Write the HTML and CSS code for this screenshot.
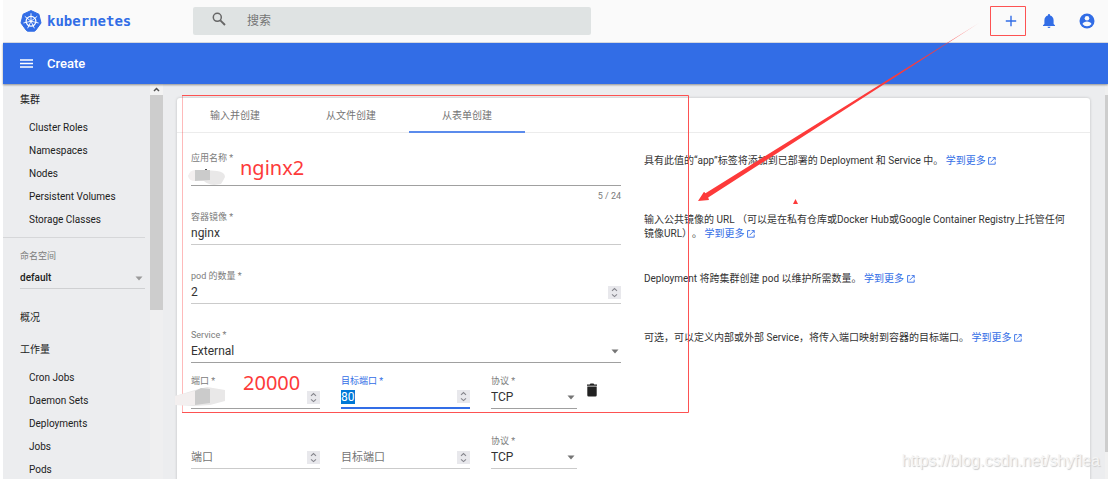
FILE: index.html
```html
<!DOCTYPE html>
<html lang="zh-CN">
<head>
<meta charset="utf-8">
<title>Kubernetes Dashboard</title>
<link rel="stylesheet" href="styles.css">
</head>
<body>
<svg class="defs" width="0" height="0" aria-hidden="true">
  <symbol id="caret" viewBox="0 0 8 5"><path d="M0.5 0.5h7L4 4.5z" fill="currentColor"/></symbol>
  <symbol id="spin" viewBox="0 0 13 13"><rect width="13" height="13" fill="#e8e8ec"/><path d="M4 4.8 6.5 2.6 9 4.8M4 8.4l2.5 2.2L9 8.4" fill="none" stroke="#85858c" stroke-width="1.1"/></symbol>
  <symbol id="ext" viewBox="0 0 8 8"><path d="M3.2.6H.6v6.6h6.6V4.6M4.6.6h2.6v2.6M7.2.6 2.6 5.2" fill="none" stroke="currentColor" stroke-width=".9"/></symbol>
</svg>

<header class="topbar">
  <a class="brand" href="#">
    <svg width="22" height="22" viewBox="0 0 22 22" aria-hidden="true">
      <path d="M11 .6 18.9 4.2 21 13 15.6 20.4Q15.1 21.2 14.2 21.2H7.8Q6.900 21.2 6.400 20.4L1 13 3.100 4.200z" fill="#326de6" stroke="#326de6" stroke-linejoin="round"/>
      <g fill="none" stroke="#fff" stroke-linecap="round">
        <circle cx="11" cy="11.300" r="4.900" stroke-width="1.200"/>
        <path stroke-width=".9" d="M11 9.800V3.700M12.200 10.300 16.900 6.600M12.500 11.600 18.200 12.900M11.700 12.700 14.200 17.900M10.300 12.700 7.800 17.900M9.500 11.600 3.800 12.900M9.800 10.300 5.100 6.600"/>
      </g>
      <circle cx="11" cy="11.300" r="1.300" fill="#fff"/>
    </svg>
    <span>kubernetes</span>
  </a>
  <label class="search">
    <svg width="14" height="14" viewBox="0 0 14 14" aria-hidden="true"><circle cx="5.300" cy="5.300" r="4" fill="none" stroke="#666" stroke-width="1.500"/><path d="m8.300 8.300 4.700 4.700" stroke="#666" stroke-width="1.900"/></svg>
    <input type="text" placeholder="搜索" aria-label="搜索">
  </label>
  <div class="actions">
    <button type="button" aria-label="创建"><svg width="16" height="16" viewBox="0 0 16 16"><path d="M8 2.800v10.400M2.800 8h10.400" stroke="#326de6" stroke-width="1.400"/></svg></button>
    <button type="button" aria-label="通知"><svg width="16" height="16" viewBox="0 0 16 16"><path d="M8 15a1.500 1.500 0 0 0 1.500-1.300h-3A1.500 1.500 0 0 0 8 15zM12.600 11V7.200c0-2.300-1.400-4.100-3.500-4.600V2a1.100 1.100 0 0 0-2.200 0v.6C4.800 3.100 3.400 4.900 3.400 7.200V11L2 12.300v.7h12v-.7z" fill="#326de6"/></svg></button>
    <button type="button" aria-label="用户"><svg width="16" height="16" viewBox="0 0 16 16"><circle cx="8" cy="8" r="7.500" fill="#326de6"/><circle cx="8" cy="5.200" r="2.300" fill="#fafafa"/><path d="M3.500 10.900c.1-1.500 3-2.400 4.500-2.400s4.400.9 4.500 2.400A5.400 5.400 0 0 1 8 13.300a5.400 5.400 0 0 1-4.500-2.400z" fill="#fafafa"/></svg></button>
  </div>
</header>

<div class="titlebar">
  <button type="button" aria-label="菜单"><svg width="13" height="9" viewBox="0 0 13 9"><path d="M0 1h13M0 4.500h13M0 8h13" stroke="#fff" stroke-width="1.400"/></svg></button>
  <h1>Create</h1>
</div>

<div class="body">
  <nav class="sidebar">
    <div class="menu">
      <a class="group" href="#">集群</a>
      <a class="item" href="#">Cluster Roles</a>
      <a class="item" href="#">Namespaces</a>
      <a class="item" href="#">Nodes</a>
      <a class="item" href="#">Persistent Volumes</a>
      <a class="item" href="#">Storage Classes</a>
      <div class="namespace">
        <label class="label" for="ns">命名空间</label>
        <div class="pick"><select id="ns"><option>default</option></select><svg class="caret" width="8" height="5"><use href="#caret"/></svg></div>
      </div>
      <a class="group" href="#">概况</a>
      <a class="group" href="#">工作量</a>
      <a class="item" href="#">Cron Jobs</a>
      <a class="item" href="#">Daemon Sets</a>
      <a class="item" href="#">Deployments</a>
      <a class="item" href="#">Jobs</a>
      <a class="item" href="#">Pods</a>
    </div>
    <div class="scroll"><svg width="13" height="11" viewBox="0 0 13 11"><path d="m4 7 2.500-2.500L9 7" fill="none" stroke="#505050" stroke-width="1.500"/></svg><div class="thumb"></div></div>
  </nav>

  <main class="content">
    <section class="card">
      <div class="tabs" role="tablist">
        <button type="button" role="tab">输入并创建</button>
        <button type="button" role="tab">从文件创建</button>
        <button type="button" role="tab" class="active" aria-selected="true">从表单创建</button>
      </div>
      <form class="form">
        <div class="row">
          <div class="field dark"><label class="label" for="app">应用名称 *</label><div class="control"><input id="app" type="text"></div><span class="count">5 / 24</span></div>
          <p class="help">具有此值的“app”标签将添加到已部署的 Deployment 和 Service 中。 <a href="#">学到更多 <svg width="8" height="8"><use href="#ext"/></svg></a></p>
        </div>
        <div class="row">
          <div class="field"><label class="label" for="image">容器镜像 *</label><div class="control"><input id="image" type="text" value="nginx"></div></div>
          <p class="help">输入公共镜像的 URL （可以是在私有仓库或Docker Hub或Google Container Registry上托管任何镜像URL）。 <a href="#">学到更多 <svg width="8" height="8"><use href="#ext"/></svg></a></p>
        </div>
        <div class="row">
          <div class="field"><label class="label" for="pods">pod 的数量 *</label><div class="control"><input id="pods" type="text" inputmode="numeric" value="2"><svg width="13" height="13"><use href="#spin"/></svg></div></div>
          <p class="help">Deployment 将跨集群创建 pod 以维护所需数量。 <a href="#">学到更多 <svg width="8" height="8"><use href="#ext"/></svg></a></p>
        </div>
        <div class="row last">
          <div class="field dark"><label class="label" for="service">Service *</label><div class="pick"><select id="service"><option>External</option></select><svg class="caret" width="8" height="5"><use href="#caret"/></svg></div></div>
          <p class="help">可选，可以定义内部或外部 Service，将传入端口映射到容器的目标端口。 <a href="#">学到更多 <svg width="8" height="8"><use href="#ext"/></svg></a></p>
        </div>
        <div class="row">
          <div class="port">
            <div class="port-fields">
              <div class="field dark"><label class="label" for="port1">端口 *</label><div class="control"><input id="port1" type="text" inputmode="numeric"><svg width="13" height="13"><use href="#spin"/></svg></div></div>
              <div class="field focused"><label class="label" for="target1">目标端口 *</label><div class="control"><input id="target1" type="text" inputmode="numeric" value="80"><svg width="13" height="13"><use href="#spin"/></svg></div></div>
              <div class="field dark"><label class="label" for="proto1">协议 *</label><div class="pick"><select id="proto1"><option>TCP</option></select><svg class="caret" width="8" height="5"><use href="#caret"/></svg></div></div>
            </div>
            <button type="button" class="trash" aria-label="删除"><svg width="12" height="14" viewBox="0 0 12 14"><path d="M1 1.600h2.700l.8-1h3l.8 1H11v1.200H1zM1.300 3.600h9.400v8.600q0 1.300-1.300 1.300H2.600q-1.300 0-1.300-1.300z" fill="#212121"/></svg></button>
          </div>
        </div>
        <div class="row">
          <div class="port">
            <div class="port-fields">
              <div class="field"><span class="label"></span><div class="control"><input type="text" inputmode="numeric" placeholder="端口" aria-label="端口"><svg width="13" height="13"><use href="#spin"/></svg></div></div>
              <div class="field"><span class="label"></span><div class="control"><input type="text" inputmode="numeric" placeholder="目标端口" aria-label="目标端口"><svg width="13" height="13"><use href="#spin"/></svg></div></div>
              <div class="field"><label class="label" for="proto2">协议 *</label><div class="pick"><select id="proto2"><option>TCP</option></select><svg class="caret" width="8" height="5"><use href="#caret"/></svg></div></div>
            </div>
          </div>
        </div>
      </form>
    </section>
  </main>
  <div class="page-scroll"><div class="thumb"></div></div>
</div>

<div class="notes">
  <svg width="1108" height="479" viewBox="0 0 1108 479" aria-hidden="true">
    <defs><linearGradient id="fade" x1="1" x2="0" y1="0" y2="0"><stop offset="0" stop-color="#fd3a3a" stop-opacity=".5"/><stop offset=".2" stop-color="#fd3a3a"/></linearGradient></defs>
    <path d="M182.500 412V95" stroke="#fd3a3a" stroke-opacity=".35" fill="none"/>
    <path d="M188 176q4-7 17-6l12 1q8 1 8 6-2 4-4 7l-7 1q-7-1-10-4l-10-1z" fill="#e9e8e8"/>
    <path d="M188 176q2-6 7-6v11q-6 0-7-5z" fill="#f3efef"/>
    <path d="M195 170h15v10l-15 1z" fill="#cbcbcb"/><path d="M205 169h2v1h-2z" fill="#555"/>
    <path d="M175 396l20-6 12-3 18 3v11l-15 4-16 1-19-1z" fill="#e9e8e8"/>
    <path d="M175 396l20-5v14h-20z" fill="#f3efef"/><path d="M195 391l6-3 9 1v14l-15 2z" fill="#cbcbcb"/>
    <path d="M979 23 705.500 193.200 704 191.700 698 201 709 200 708.200 197.600z" fill="url(#fade)"/>
    <path d="m793 204 2.500-5 2.500 5z" fill="#fd3a3a"/>
    <path d="M182 95.500h506.500V412.500H182" stroke="#fd5252" fill="none"/>
    <path d="M990.500 6.500h35v29h-35z" stroke="#fd5252" fill="none"/>
  </svg>
  <span class="note note-name">nginx2</span>
  <span class="note note-port">20000</span>
  <span class="watermark">https://blog.csdn.net/shyflea</span>
</div>
<script src="main.js"></script>
</body>
</html>
```
FILE: styles.css
```css
* { box-sizing: border-box; }
body {
  margin: 0;
  height: 100vh;
  padding-left: 3px;
  position: relative;
  overflow: hidden;
  display: flex;
  flex-direction: column;
  background: #fff;
  color: #212121;
  font: 10px/14px Roboto, "Noto Sans CJK SC", sans-serif;
  text-spacing-trim: space-all;
}
.defs { position: absolute; }
button, input, select {
  appearance: none;
  margin: 0;
  padding: 0;
  border: 0;
  outline: 0;
  background: none;
  border-radius: 0;
  color: inherit;
  font: inherit;
  min-width: 0;
}
a { color: inherit; text-decoration: none; }
svg { display: block; flex: none; }

.topbar {
  flex: none;
  height: 43px;
  display: flex;
  align-items: center;
  background: #fafafa;
  border-bottom: 1px solid #dcdfe6;
}
.brand {
  width: 190px;
  padding-left: 17px;
  display: flex;
  align-items: center;
  gap: 5px;
  color: #326de6;
  font: bold 14px/20px "DejaVu Sans Mono", monospace;
}
.search {
  width: 36%;
  height: 28px;
  padding-left: 19px;
  display: flex;
  align-items: center;
  gap: 21px;
  border-radius: 2px;
  background: #dfe3e3;
  font-size: 12px;
}
.search input { flex: 1; }
.search svg { margin-bottom: 4px; }
.search input::placeholder { color: #757575; }
.actions {
  margin-left: auto;
  padding-right: 13px;
  display: flex;
  gap: 22px;
}

.titlebar {
  flex: none;
  height: 41px;
  padding-left: 17px;
  display: flex;
  align-items: center;
  gap: 14px;
  color: #fff;
  background: #326de6;
  box-shadow: 0 1px 2px rgba(0, 0, 0, .4);
  z-index: 1;
}
.titlebar h1 { margin: 0; font-size: 13px; line-height: 20px; font-weight: 500; }

.body { flex: 1; min-height: 0; display: flex; background: #ecedef; }
.sidebar { width: 160px; flex: none; display: flex; gap: 5px; overflow: hidden; }
.menu { flex: 1; display: flex; flex-direction: column; }
.group { flex: none; padding-left: 17px; line-height: 32px; }
.item { flex: none; padding-left: 26px; line-height: 23px; }
.namespace {
  flex: none;
  margin: 6px 0 13px;
  padding: 12px 0 0 17px;
  border-top: 1px solid #d6d7d9;
}
.label { display: block; height: 12px; font-size: 9px; line-height: 14px; color: #7b7b7b; }
.namespace .label { line-height: 12px; }
.namespace .pick { margin-top: 6px; height: 21px; border-bottom: 1px solid #cfd0d2; font-weight: 500; }
.namespace .caret { color: #9a9a9a; }
.pick { display: grid; align-items: center; }
.pick > * { grid-area: 1 / 1; }
.pick select { width: 100%; }
.caret { justify-self: end; margin-right: 2px; color: #757575; pointer-events: none; }
.scroll { width: 13px; background: #efeff0; }
.thumb { background: #cdcdcd; }
.scroll svg { background: #f3f3f3; }
.scroll .thumb { height: 215px; }

.content { flex: 1; min-width: 0; padding: 14px 15px 0 14px; }
.card {
  min-height: 100%;
  border-radius: 3px;
  background: #fff;
  box-shadow: 0 0 3px rgba(0, 0, 0, .2);
}
.tabs { height: 35px; display: flex; border-bottom: 1px solid #ececec; }
.tabs button { width: 116px; height: 35px; padding-top: 2px; color: #757575; border-bottom: 2px solid transparent; }
.tabs .active { border-color: #5b8bec; }
.form { padding: 18px 16px 0 14px; }
.row {
  min-height: 59px;
  display: grid;
  grid-template-columns: 1fr 1fr;
  column-gap: 23px;
  align-items: start;
}
.row.last { min-height: 46px; }
.row:nth-child(5) { min-height: 60px; }
.field { min-width: 0; color: #333; font-size: 12px; }
.control, .field .pick { height: 23px; border-bottom: 1px solid #cbcbcb; }
.field.dark .control, .field.dark .pick { border-color: #a0a0a0; }
.control { display: flex; align-items: center; }
.control input { flex: 1; width: 0; }
.control input::placeholder { color: #757575; font-size: 11px; }
.control input::selection { background: #0078d7; color: #fff; }
.focused .control { border-bottom: 2px solid #326de6; }
.focused .label { color: #326de6; }
.count { display: block; margin-top: 3px; font-size: 9px; line-height: 14px; color: #7b7b7b; text-align: right; }
.help { margin: 0; padding-top: 3px; color: #333; }
.help a { color: #326de6; white-space: nowrap; }
.help svg { display: inline; vertical-align: -1px; }
.port { display: grid; grid-template-columns: 1fr 44px; }
.port-fields { display: grid; grid-template-columns: 3fr 3fr 2fr; gap: 21px; }
.trash { justify-self: start; align-self: center; padding: 0 0 3px 9px; }
.page-scroll { width: 3px; padding-top: 11px; background: #f0f0f0; }
.page-scroll .thumb { height: 357px; }

.notes { position: absolute; inset: 0; overflow: hidden; pointer-events: none; z-index: 2; }
.note { position: absolute; color: #fd3a3a; font: 20px/28px "Noto Sans", sans-serif; }
.note-name { left: 240px; top: 154px; }
.note-port { left: 243px; top: 369px; }
.watermark {
  position: absolute;
  right: 8px;
  bottom: 8px;
  color: #f4f4f4;
  text-shadow: 1px 1px 1px #ccc;
  font: 16px/20px "Liberation Sans", sans-serif;
}
```
FILE: main.js
```js
const target = document.getElementById('target1');
target.focus();
target.select();
```
